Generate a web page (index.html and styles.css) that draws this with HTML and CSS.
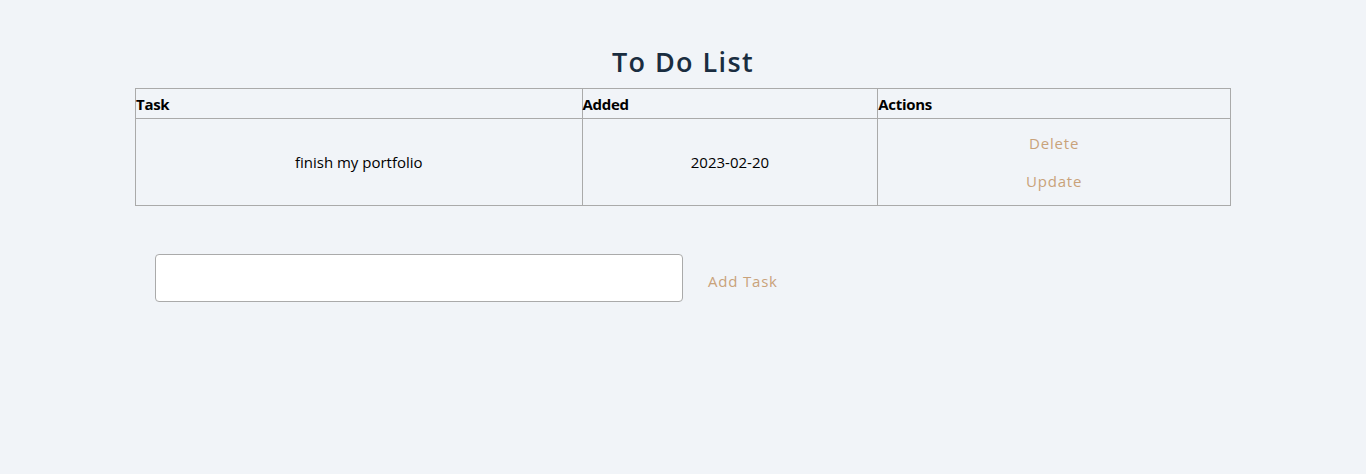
FILE: index.html
```html
<!DOCTYPE html>
<html>
<head>
<meta charset="utf-8">
<link rel="stylesheet" href="styles.css">
</head>
<body>
<div class="page">
  <h1 class="title">To Do List</h1>
  <table class="todo">
    <thead>
      <tr>
        <th class="c-task">Task</th>
        <th class="c-added">Added</th>
        <th class="c-actions">Actions</th>
      </tr>
    </thead>
    <tbody>
      <tr>
        <td>finish my portfolio</td>
        <td>2023-02-20</td>
        <td>
          <div class="actions">
            <button class="link-btn">Delete</button>
            <button class="link-btn">Update</button>
          </div>
        </td>
      </tr>
    </tbody>
  </table>
  <form class="add-form">
    <input class="task-input" type="text">
    <button type="button" class="link-btn add-btn">Add Task</button>
  </form>
</div>
</body>
</html>
```

FILE: styles.css
```css
* { box-sizing: border-box; }
html, body { margin: 0; padding: 0; }
body {
  background: #f1f4f8;
  font-family: "Open Sans", "Noto Sans", sans-serif;
  color: #000;
  height: 474px;
}
.page {
  padding-top: 44px;
}
.title {
  margin: 0 0 8px 0;
  text-align: center;
  font-size: 27px;
  font-weight: 600;
  letter-spacing: 1.4px;
  color: #1a2d40;
  line-height: 36px;
}
.todo {
  width: 1096px;
  margin: 0 0 0 135px;
  border-collapse: collapse;
  border: 1px solid #aaa;
}
.todo th, .todo td {
  border: 1px solid #aaa;
  padding: 0;
}
.todo th {
  text-align: left;
  font-size: 15px;
  font-weight: 700;
  height: 30px;
  padding-top: 1px;
  letter-spacing: -0.3px;
}
.c-task { width: 447px; }
.c-added { width: 296px; }
.c-actions { width: 353px; }
.todo td {
  text-align: center;
  font-size: 15px;
  height: 87px;
}
.actions {
  display: flex;
  flex-direction: column;
  align-items: center;
  gap: 8px;
  padding-bottom: 1px;
}
.link-btn {
  background: none;
  border: none;
  font-family: "Open Sans", "Noto Sans", sans-serif;
  font-size: 15px;
  color: #c9a27a;
  letter-spacing: 0.8px;
  padding: 5px 10px;
  line-height: 20px;
  cursor: pointer;
}
.add-form {
  display: flex;
  align-items: center;
  margin: 48px 0 0 155px;
  gap: 15px;
}
.task-input {
  width: 528px;
  height: 48px;
  border: 1px solid #aaa;
  border-radius: 4px;
  background: #fff;
}
.add-btn {
  padding-top: 11px;
}
```
